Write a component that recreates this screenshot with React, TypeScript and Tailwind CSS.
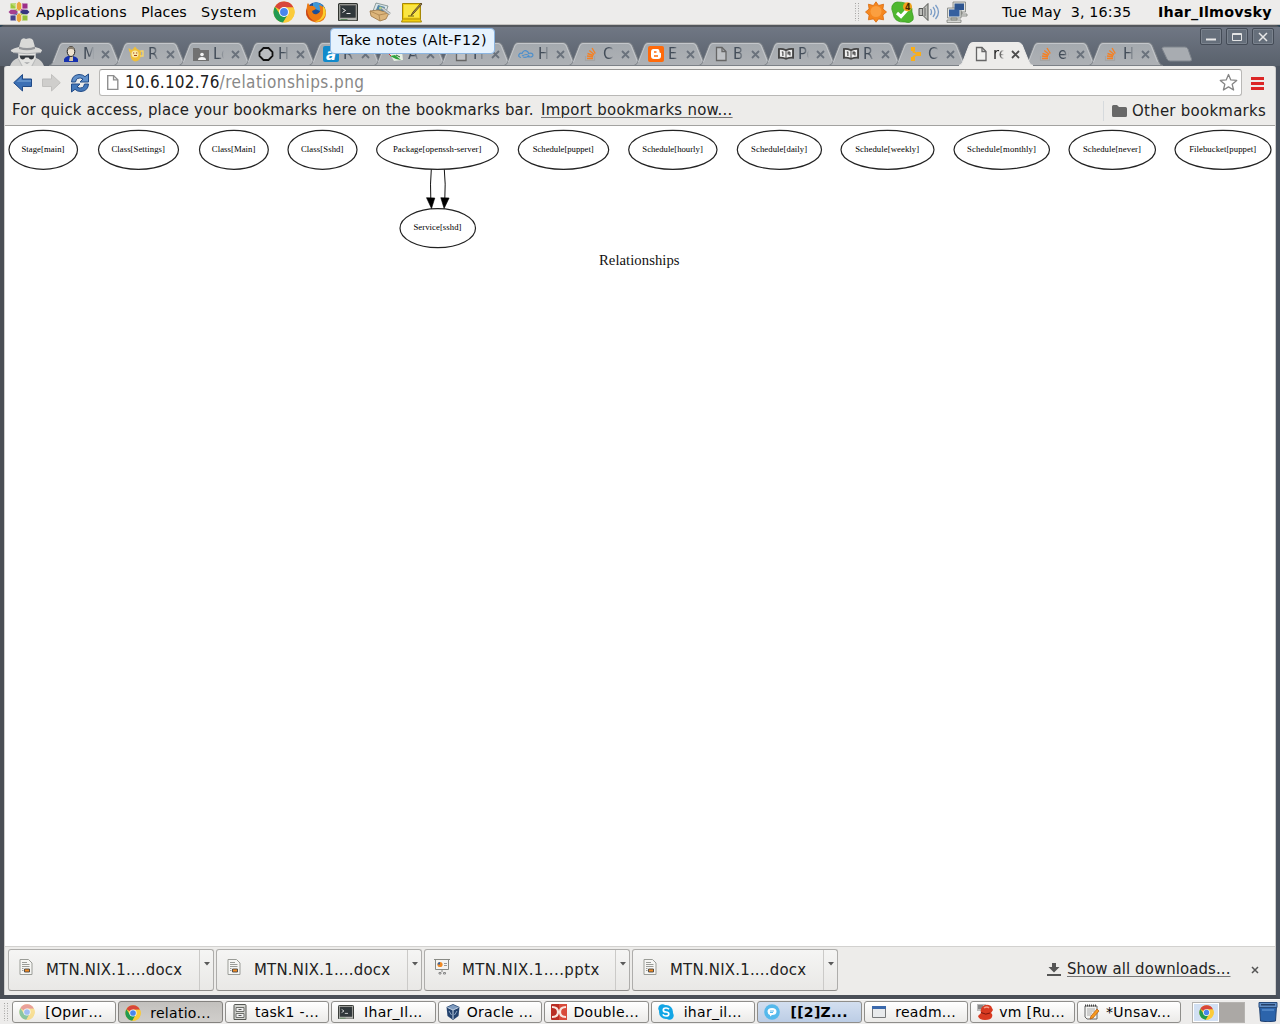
import React, { type ReactNode } from "react";

/* ---------- icons ---------- */

function Chrome({ size = 22, faded = false }: { size?: number; faded?: boolean }) {
  return (
    <svg width={size} height={size} viewBox="0 0 24 24" className={faded ? "opacity-50" : ""}>
      <circle cx="12" cy="12" r="11.500" fill="#f7c52b" />
      <path d="M12 12 L2.1 6.200 A11.500 11.500 0 0 1 22.400 7 L12 7z" fill="#d8463a" />
      <path d="M2.1 6.200 A11.500 11.500 0 0 0 11 23.500 L16.500 14.500 L7.600 14.500z" fill="#229a50" />
      <path d="M12 7 H22.400 A11.500 11.500 0 0 1 11 23.500 L16.400 14.400z" fill="#fbcb3a" />
      <circle cx="12" cy="12" r="5.400" fill="#fff" />
      <circle cx="12" cy="12" r="4.300" fill="#4a86ee" />
    </svg>
  );
}

function Pinwheel() {
  return (
    <svg width="22" height="22" viewBox="0 0 22 22">
      <path d="M11 .500l2.500 2.500v4.500L11 10 8.500 7.500V3z" fill="#eaa63c" />
      <path d="M11 21.500L8.500 19v-4.500L11 12l2.500 2.500V19z" fill="#eaa63c" />
      <path d="M.500 11L3 8.500h4.500L10 11l-2.500 2.500H3z" fill="#a6408f" />
      <path d="M21.500 11L19 13.500h-4.500L12 11l2.500-2.500H19z" fill="#36357f" />
      <path d="M2.500 2.500h5.500v5L10 10 2.500 7.500z" fill="#9cc83c" />
      <path d="M2.500 2.500h5.500L7.300 6z" fill="#b9da6c" />
      <path d="M19.500 2.500H14v5L12 10l7.500-2.500z" fill="#9d2e88" />
      <path d="M2.500 19.500h5.500v-5L10 12l-7.500 2.500z" fill="#45448c" />
      <path d="M19.500 19.500H14v-5L12 12l7.500 2.500z" fill="#93c03a" />
      <path d="M8 3v5H3M14 3v5h5M8 19v-5H3M14 19v-5h5" stroke="#fff" strokeWidth="0.700" fill="none" />
    </svg>
  );
}

function Firefox() {
  return (
    <svg width="22" height="22" viewBox="0 0 22 22">
      <circle cx="11" cy="11" r="9.800" fill="#1c4f99" />
      <path d="M8 2q6-2 10 3l-3 5-7-3z" fill="#3c98d8" />
      <path d="M2 5q0-2 1-3l2 3q4-1 6 3l-4 2q1 4 5 3 4-2 3-5 0-2-1-4 7 2 7 8 0 9-10 9.500Q1 20 1 11z" fill="#ec7a14" />
      <path d="M18 4.500q5 6 1 12-4 5-9 4 7-2 8-8z" fill="#fbcf2c" />
      <path d="M2 8q0 9 8 12.500Q1 19 1 10z" fill="#c9411b" />
    </svg>
  );
}

function Terminal({ size = 20 }: { size?: number }) {
  return (
    <svg width={size} height={size * 0.92} viewBox="0 0 20 18.4">
      <rect x="0.6" y="0.6" width="18.8" height="17.2" rx="1" fill="#b4b6b2" stroke="#30332f" strokeWidth="1.2" />
      <rect x="2.5" y="2.5" width="15" height="12" fill="#30383b" stroke="#444" strokeWidth="0.6" />
      <path d="M4.500 5.500l3 2-3 2M8.500 10.500h4" stroke="#eee" fill="none" />
      <path d="M2.500 16.500h7" stroke="#5a8a5a" />
    </svg>
  );
}

function MailBox() {
  return (
    <svg width="22" height="20" viewBox="0 0 22 20">
      <path d="M7 1l12 3-3 9-12-4z" fill="#dce6e8" stroke="#788" strokeWidth="0.8" />
      <path d="M9 3l7 2-2 5-7-2z" fill="#5287a8" />
      <circle cx="11.500" cy="6" r="1.500" fill="#b9d08a" />
      <path d="M1 9l8-1 11 3-3 6-6 2-9-5z" fill="#dcb57b" stroke="#9b7443" strokeWidth="0.8" />
      <path d="M1 9l9 4 10-2M10 13l1 6" fill="none" stroke="#a9824d" strokeWidth="0.8" />
      <path d="M13 6l8 6" stroke="#8d9496" strokeWidth="2.600" />
      <path d="M13 6l8 6" stroke="#d4d9da" strokeWidth="1.200" />
    </svg>
  );
}

function Note() {
  return (
    <svg width="22" height="21" viewBox="0 0 22 21">
      <path d="M1.500 1.500h18v16l1 2.500H.500l1-2.500z" fill="#f2cf10" stroke="#a68806" />
      <path d="M1.500 17h18" stroke="#b18f08" />
      <path d="M3 3h15v12.500H3z" fill="#fae544" />
      <path d="M20 1l-8 9-2 3.500 3-2.500 8-9z" fill="#a98d55" stroke="#4b3a14" strokeWidth="0.8" />
      <path d="M7 14h6" stroke="#6a5a10" />
    </svg>
  );
}

function Starburst() {
  return (
    <svg width="22" height="22" viewBox="0 0 22 22">
      <path d="M11 .800l2.600 3.700 5-1.300-.700 4.800 3.600 3-3.600 3 .700 4.800-5-.900L11 21.200l-2.600-3.300-5 .900.700-4.800L.500 11l3.600-3-.700-4.800 5 1.300z" fill="#f5871f" stroke="#d9690c" strokeWidth="0.800" />
      <circle cx="11" cy="10.500" r="5.500" fill="#fb9f40" />
    </svg>
  );
}

function SkypeStatus() {
  return (
    <svg width="23" height="23" viewBox="0 0 23 23">
      <path d="M6 1q5 0 8 1 8 2 7 9 2 5 1 8-3 4-8 2Q3 22 2 12 0 8 1 5q2-4 5-4z" fill="#4fb830" stroke="#389a1e" strokeWidth="0.700" />
      <path d="M6 12l4 3.500 6-6.500" stroke="#fff" strokeWidth="3.200" fill="none" />
      <circle cx="16.500" cy="5.800" r="4.500" fill="#f3a21c" />
      <text x="14" y="8.700" fontSize="8" fontWeight="bold" fontFamily="DejaVu Sans, sans-serif" fill="#4a2a00">4</text>
    </svg>
  );
}

function Speaker() {
  return (
    <svg width="22" height="20" viewBox="0 0 22 20">
      <path d="M1 6.500h4L10 1.500v17L5 13.500H1z" fill="#bcbdb9" stroke="#555753" />
      <path d="M4.500 7v6M7 6v8" stroke="#666" />
      <path d="M12.500 7q2 3 0 6M15 5q4 5 0 10M17.500 3q6 7 0 14" fill="none" stroke="#7a9cc6" strokeWidth="1.300" />
    </svg>
  );
}

function Network() {
  return (
    <svg width="22" height="22" viewBox="0 0 22 22">
      <g stroke="#7c7e79" strokeWidth="0.800" fill="#e2e3e0">
        <path d="M7 1h12.500v10H7zM11 11h5v2h-5zM9 13h12v2H9z" />
        <path d="M1.500 7H15v10H1.500zM5 17h6v2H5zM1 19h14v2.400H1z" />
      </g>
      <path d="M8.500 2.500H18v6.500H8.500z" fill="#2e5590" />
      <path d="M3 8.500h10.500v7H3z" fill="#355f9f" />
    </svg>
  );
}

function Incognito() {
  return (
    <svg width="34" height="28" viewBox="0 0 34 28">
      <path d="M0 28q2-6 8-8l1-4h16l1 4q6 2 8 8z" fill="#d0d0cf" />
      <path d="M8 14h18l-1 8-4 6h-8l-4-6z" fill="#e4e4e2" />
      <path d="M9 9l2-7q2-3 5-1 5-2 7 1l2 7q5 1 7 3 0 2-3 2.500-12 2-25 0Q0 14 1 12q3-2 8-3z" fill="#dadad8" />
      <path d="M9 8.500q8 3 16 0v2.500q-8 2.500-16 0z" fill="#94969a" />
      <path d="M3 14.500q14 2.500 28 0" stroke="#b3b5b7" fill="none" />
      <path d="M9.500 17.500h15l-1 3q-3 2.500-5-1h-3q-2 3.500-5 1z" fill="#33383e" />
      <path d="M8.500 21l3.500 7M25.500 21L22 28" stroke="#b0b2b3" fill="none" strokeWidth="0.800" />
      <path d="M14 24.500h6l-3 1.200z" fill="#8b8e91" />
    </svg>
  );
}

function PageIcon({ color = "#666", size = 16 }: { color?: string; size?: number }) {
  return (
    <svg width={size} height={size} viewBox="0 0 16 16">
      <path d="M3.500 1.500h5.500l4 4v9h-9.500z" fill="#fff" fillOpacity="0.250" stroke={color} strokeWidth="1.300" />
      <path d="M9 1.500v4h4" fill="none" stroke={color} strokeWidth="1.300" />
    </svg>
  );
}

const favicon: Record<string, ReactNode> = {
  person: (
    <svg width="16" height="16" viewBox="0 0 16 16">
      <path d="M1 16v-3q1-2 4-3h5q4 1 5 3v3z" fill="#1631ae" />
      <path d="M7 10h3v5H6z" fill="#d8c8a8" />
      <ellipse cx="8" cy="5.500" rx="3.800" ry="5" fill="#eee2cf" stroke="#222" />
      <path d="M4.500 4q0-3.500 3.500-3.500T11.500 4q-3.500-2-7 0z" fill="#8a8172" />
    </svg>
  ),
  teapot: (
    <svg width="16" height="16" viewBox="0 0 16 16">
      <path d="M2.500 7Q.500 5 .500 2l3 2 1.500-1 2-2.500L9 3l4 2v5q-1 5-6 5.500Q2 14 2.500 7z" fill="#f0bf38" />
      <circle cx="7" cy="8" r="3.500" fill="#fae9a6" />
      <path d="M5 7h1.300M8 7h1.300M6 9.500h3" stroke="#a2461b" />
      <path d="M12.500 5h2.500v5h-3" fill="none" stroke="#f6d468" strokeWidth="1.400" />
    </svg>
  ),
  folder: (
    <svg width="16" height="14" viewBox="0 0 16 14">
      <path d="M0 1h6l1.500 2H16v11H0z" fill="#717171" />
      <circle cx="9" cy="7.500" r="1.800" fill="#f3f3f3" />
      <path d="M5 13q0-3 4-3t4 3z" fill="#f3f3f3" />
    </svg>
  ),
  hex: (
    <svg width="16" height="16" viewBox="0 0 16 16">
      <path d="M5.500 2h5l4 4v4l-4 4h-5l-4-4V6z" fill="#b9bcc0" stroke="#111" strokeWidth="1.800" />
    </svg>
  ),
  a: (
    <svg width="16" height="16" viewBox="0 0 16 16">
      <rect width="16" height="16" rx="2" fill="#118acb" />
      <text x="3" y="13.500" fontSize="15" fontStyle="italic" fontWeight="bold" fontFamily="DejaVu Sans, sans-serif" fill="#fff">a</text>
    </svg>
  ),
  green: (
    <svg width="16" height="16" viewBox="0 0 16 16">
      <path d="M0 5h14l1 9-9 1z" fill="#e7efe3" />
      <path d="M2 10l5-1 6 5-5-1z" fill="#2fa23b" />
      <path d="M8 9l4 2" stroke="#266d2c" />
      <path d="M1 8l2 2" stroke="#c33" />
    </svg>
  ),
  page: <PageIcon />,
  cloud: (
    <svg width="16" height="12" viewBox="0 0 16 12">
      <path d="M3 9.500Q0 9 1 6.500q1-2 3-1Q6 1 9.500 3.500q1 1 1 2 4-1 4.500 1.500 0 3-6 1.500M4 8q5-3 7 0-3 2-6 1" fill="none" stroke="#4d8fcc" strokeWidth="1.200" />
    </svg>
  ),
  stack: (
    <svg width="14" height="16" viewBox="0 0 14 16">
      <path d="M1.500 10v4.500h9V10" fill="none" stroke="#a4a4a4" strokeWidth="1.200" />
      <path d="M3 12.500h6M3 10l6 .800M3.500 7.500l6 2M5.300 4.500l4.900 4M8 2l3.300 5.500" stroke="#f48024" strokeWidth="1.400" />
    </svg>
  ),
  blogger: (
    <svg width="16" height="16" viewBox="0 0 16 16">
      <rect width="16" height="16" rx="2" fill="#ff6a0a" />
      <path d="M5.500 3h4q2 0 2 3 0 1 1.500 1v3q0 3-3 3H6q-3 0-3-3V6q0-3 2.500-3z" fill="#fff" />
      <path d="M6 6h2.500M6 10h4" stroke="#ff6a0a" strokeWidth="1.400" />
    </svg>
  ),
  book: (
    <svg width="16" height="14" viewBox="0 0 17 14">
      <path d="M0 1q4-1 8.500 1Q13 0 17 1v11q-4-1-8.500 1Q4 11 0 12z" fill="#444" />
      <path d="M2 2.500q3 0 6 1.200v7.300q-3-1.200-6-1zM9 3.700q3-1.200 6-1.200V10q-3-.200-6 1z" fill="#eee" />
      <path d="M4 4.500l1.200.500v4M12.700 5h-2v2h2v-2 3.500" fill="none" stroke="#444" strokeWidth="1.200" />
    </svg>
  ),
  nodes: (
    <svg width="12" height="16" viewBox="0 0 12 16">
      <path d="M3.500 3v3l5 2-5 2.500V13" fill="none" stroke="#fbae16" strokeWidth="1.800" />
      <path d="M1 1h4v4H1zM7 6h4v4H7zM1 11h4v4H1z" fill="#fbae16" />
    </svg>
  ),
};

/* ---------- browser tabs ---------- */

const tabs: { icon: string; label: string; active?: boolean }[] = [
  { icon: "person", label: "M" },
  { icon: "teapot", label: "R" },
  { icon: "folder", label: "Lo" },
  { icon: "hex", label: "H" },
  { icon: "a", label: "R" },
  { icon: "green", label: "A" },
  { icon: "page", label: "H" },
  { icon: "cloud", label: "H" },
  { icon: "stack", label: "C" },
  { icon: "blogger", label: "E" },
  { icon: "page", label: "B" },
  { icon: "book", label: "Po" },
  { icon: "book", label: "R" },
  { icon: "nodes", label: "C" },
  { icon: "page", label: "re", active: true },
  { icon: "stack", label: "ec" },
  { icon: "stack", label: "H" },
];

function Tab({ icon, label, active }: { icon: string; label: string; active?: boolean }) {
  return (
    <div className={`relative h-6 w-[65px] shrink-0 ${active ? "z-10" : ""}`}>
      <svg width="77" height="24" viewBox="0 0 77 24" className="absolute left-[-1px] top-0">
        <path
          d="M0 23.500Q2.500 23 3.500 20.500L10 3.500Q11 .500 14 .500H59Q62 .500 63.200 3L70 20Q71.500 23.500 74 23.500z"
          fill={active ? "#edecea" : "url(#tabfill)"}
          stroke={active ? "#edecea" : "#7c8187"}
        />
        {!active && <path d="M4.500 20L10.800 4Q11.800 1.500 14 1.500H59Q61 1.500 62.200 4L68.500 20" fill="none" stroke="#c3c6ca" />}
      </svg>
      <div className="relative flex h-full items-center pl-[13px]">
        <span className="flex w-4 shrink-0 justify-center">{favicon[icon]}</span>
        <span
          className={`ml-[4px] w-[11px] shrink-0 overflow-hidden text-[16.500px] leading-[22px] [mask-image:linear-gradient(to_right,black_50%,transparent)] ${active ? "text-[#222]" : "text-[#434d59]"}`}
        >
          {label}
        </span>
        <svg width="9" height="9" viewBox="0 0 9 9" className="ml-[7px] shrink-0">
          <path d="M1 1l7 7M8 1L1 8" stroke={active ? "#4c4c4c" : "#6a727c"} strokeWidth="1.800" />
        </svg>
      </div>
    </div>
  );
}

/* ---------- graph ---------- */

/* x1/x2: ellipse extent, w: label width */
const nodes = [
  { label: "Stage[main]", x1: 9, x2: 77.5, w: 43 },
  { label: "Class[Settings]", x1: 98.5, x2: 178.5, w: 53.5 },
  { label: "Class[Main]", x1: 199.5, x2: 268.3, w: 43.5 },
  { label: "Class[Sshd]", x1: 288, x2: 357, w: 42.5 },
  { label: "Package[openssh-server]", x1: 376.7, x2: 498.3, w: 88.5 },
  { label: "Schedule[puppet]", x1: 518.3, x2: 608.7, w: 61 },
  { label: "Schedule[hourly]", x1: 628.7, x2: 717, w: 60.5 },
  { label: "Schedule[daily]", x1: 737.3, x2: 821.5, w: 56 },
  { label: "Schedule[weekly]", x1: 841, x2: 934, w: 64 },
  { label: "Schedule[monthly]", x1: 954, x2: 1049.5, w: 69 },
  { label: "Schedule[never]", x1: 1069, x2: 1155.5, w: 58 },
  { label: "Filebucket[puppet]", x1: 1175, x2: 1271, w: 67 },
];

function GraphNode({ label, x1, x2, w, cy }: { label: string; x1: number; x2: number; w: number; cy: number }) {
  const cx = (x1 + x2) / 2;
  return (
    <g>
      <ellipse cx={cx} cy={cy} rx={(x2 - x1) / 2} ry="19.500" fill="none" stroke="#222" strokeWidth="1.200" />
      <text x={cx - w / 2 - 0.3} y={cy + 2.2} textLength={w} fontSize="8.700" fill="#000">
        {label}
      </text>
    </g>
  );
}

function Graph() {
  return (
    <svg width="1270" height="150" viewBox="5 126 1270 150" className="block" fontFamily="Liberation Serif, serif">
      {nodes.map((n) => (
        <GraphNode key={n.label} {...n} cy={149.8} />
      ))}
      <GraphNode label="Service[sshd]" x1={400} x2={475.5} w={48} cy={228.2} />
      <path d="M431.300 169.500Q430 184 430.800 199M444.300 169.500Q445.800 184 444.800 199" fill="none" stroke="#111" />
      <path d="M426.500 197.700l8.300.300-3.300 10.500zM440.800 197.700l8.300.300-5 10.500z" fill="#000" stroke="#000" strokeWidth="0.600" />
      <text x="599" y="265" textLength="80.500" fontSize="14.700" fill="#111">
        Relationships
      </text>
    </svg>
  );
}

/* ---------- downloads ---------- */

function DocIcon({ slides = false }: { slides?: boolean }) {
  return slides ? (
    <svg width="16" height="16" viewBox="0 0 16 16">
      <path d="M0 .500h16M1.500 1v9.500h13V1" fill="#f4f4f2" stroke="#888a85" />
      <circle cx="6" cy="5.500" r="2.600" fill="#f08a24" />
      <path d="M6 5.500V3a2.600 2.600 0 0 0-2.600 2.500z" fill="#3465a4" />
      <path d="M10 4.500h3M10 6.500h3" stroke="#999" />
      <path d="M8 11v2M5 13.500h2v1.500H5zM9.500 13.500h2v1.500h-2z" stroke="#888" fill="none" />
    </svg>
  ) : (
    <svg width="14" height="16" viewBox="0 0 14 16">
      <path d="M1 .500h8.500l3.500 3.500v11.500H1z" fill="#f6f6f4" stroke="#9a9c97" />
      <path d="M3 3.500h5M3 5.500h7.500M3 7.500h7.500M3 9.500h1.500M3 11.500h1.500" stroke="#9a9c98" />
      <path d="M5.500 10h5v3h-5z" fill="#f08a24" stroke="#444" strokeWidth="0.900" />
    </svg>
  );
}

function Download({ name, slides }: { name: string; slides?: boolean }) {
  return (
    <div className="flex h-[42px] w-[206px] shrink-0 rounded-[3px] border border-[#aeadab] border-b-[#8d8c8a] bg-gradient-to-b from-[#f5f5f4] to-[#e9e8e6]">
      <div className="flex h-[40px] w-[191px] items-start border-r border-[#cbcac8]">
        <span className="ml-[9px] mt-[9px] flex w-4 justify-center">
          <DocIcon slides={slides} />
        </span>
        <span
          className={`ml-[12px] whitespace-nowrap text-[16.600px] leading-[39px] text-[#222] ${slides ? "tracking-[0.420px]" : "tracking-[0.220px]"}`}
        >
          {name}
        </span>
      </div>
      <svg width="6" height="4" viewBox="0 0 6 4" className="ml-[4px] mt-[12px]">
        <path d="M0 0h6L3 3.500z" fill="#5a5a5a" />
      </svg>
    </div>
  );
}

/* ---------- taskbar ---------- */

const taskIcons: Record<string, ReactNode> = {
  chromeFaded: <Chrome size={16} faded />,
  chrome: <Chrome size={16} />,
  cabinet: (
    <svg width="14" height="16" viewBox="0 0 14 16">
      <path d="M1 1.500q0-1 1-1h10q1 0 1 1v14H1z" fill="#d5d6d2" stroke="#555753" />
      <path d="M3 3.500h8v4H3zM3 9.500h8v4H3z" fill="#eee" stroke="#6c6e6a" />
      <path d="M5.500 5.500h3M5.500 11.500h3" stroke="#555" />
    </svg>
  ),
  terminal: <Terminal size={16} />,
  vbox: (
    <svg width="14" height="16" viewBox="0 0 14 16">
      <path d="M7 0l6.500 3-1 9L7 16l-5.500-4-1-9z" fill="#23426e" />
      <path d="M7 .800l5.500 2.500L7 6 1.500 3.300z" fill="#7f9bbf" />
      <path d="M7 6v9M1.500 3.500L7 6l5.500-2.500" fill="none" stroke="#c8d6e6" />
      <path d="M3 7l2.500 4M11 7l-2.500 4" fill="none" stroke="#8ea8c8" />
    </svg>
  ),
  dc: (
    <svg width="16" height="16" viewBox="0 0 16 16">
      <rect width="16" height="16" rx="1" fill="#b92d24" />
      <path d="M8 0h8v16H8z" fill="#d84a3a" />
      <path d="M1 3q6 0 6 5t-6 5M15 3q-6 0-6 5t6 5" stroke="#f8e6e0" strokeWidth="2.200" fill="none" />
    </svg>
  ),
  skype: (
    <svg width="16" height="16" viewBox="0 0 16 16">
      <circle cx="8" cy="8" r="7" fill="#12a5e5" />
      <circle cx="4.500" cy="4.500" r="4.200" fill="#12a5e5" />
      <circle cx="11.500" cy="11.500" r="4.200" fill="#12a5e5" />
      <path d="M11 5.300Q10 4 8 4 5.300 4 5.300 6T8 8t2.800 2T8 12q-2.300 0-3.200-1.600" stroke="#fff" strokeWidth="1.700" fill="none" />
    </svg>
  ),
  chat: (
    <svg width="16" height="16" viewBox="0 0 16 16">
      <circle cx="8" cy="8" r="7.800" fill="#55b9ec" />
      <path d="M8 4q4.500 0 4.500 3.500T8 11l-2 1.500V11Q3.500 10 3.500 7.500 3.500 4 8 4z" fill="#fff" />
      <path d="M6 7h4M6 8.500h3" stroke="#55b9ec" />
    </svg>
  ),
  window: (
    <svg width="14" height="12" viewBox="0 0 14 12">
      <path d="M.500.500h13v11H.500z" fill="#e8eaec" stroke="#77797a" />
      <path d="M0 0h14v3H0z" fill="#3b69ac" />
    </svg>
  ),
  redhat: (
    <svg width="16" height="16" viewBox="0 0 16 16">
      <path d="M0 0h9v7H0z" fill="#bbb" />
      <path d="M1 2h5M1 4h4" stroke="#555" />
      <path d="M5 3q4-4 9-1l2 4-2 3q2 1 1 4-1 3-7 3-6 0-7-4l3-3q-1-3 1-6z" fill="#d83a21" />
      <path d="M7 4q3-2 5 0" stroke="#f5a08a" fill="none" strokeWidth="1.500" />
      <path d="M4 8.500q5 3 9 .500" stroke="#7d160c" fill="none" />
    </svg>
  ),
  notepad: (
    <svg width="16" height="16" viewBox="0 0 16 16">
      <path d="M1 2h12v13H3l-2-2z" fill="#f4f4f2" stroke="#666" />
      <path d="M1 1.500h12" stroke="#444" strokeWidth="2" strokeDasharray="1 1" />
      <path d="M3 5h8M3 7h8M3 9h5M3 11h4" stroke="#aaa" />
      <path d="M13 5l2 2-6 7-3 1 1-3z" fill="#f79a1e" stroke="#b3540a" strokeWidth="0.700" />
    </svg>
  ),
};

const tasks: { icon: string; label: string; state?: "active" | "alert" }[] = [
  { icon: "chromeFaded", label: "[Ориг..." },
  { icon: "chrome", label: "relatio...", state: "active" },
  { icon: "cabinet", label: "task1 -..." },
  { icon: "terminal", label: "Ihar_Il..." },
  { icon: "vbox", label: "Oracle ..." },
  { icon: "dc", label: "Double..." },
  { icon: "skype", label: "ihar_il..." },
  { icon: "chat", label: "[[2]Z...", state: "alert" },
  { icon: "window", label: "readm..." },
  { icon: "redhat", label: "vm [Ru..." },
  { icon: "notepad", label: "*Unsav..." },
];

const taskStyle = {
  normal: "from-white to-[#ebeae8] border-[#8f8e8b]",
  active: "from-[#c3c1be] to-[#d0cecb] border-[#84827f] pt-[2px]",
  alert: "from-[#d3dff0] to-[#bccde5] border-[#8f8e8b] font-bold",
};

function Grip() {
  return (
    <svg width="5" height="18" viewBox="0 0 5 18">
      <path d="M.500 0v18M3.500 0v18" stroke="#a5a4a2" strokeDasharray="1 1.500" />
    </svg>
  );
}

function WindowButton({ children }: { children: ReactNode }) {
  return (
    <div className="flex h-[17px] w-[22px] items-center justify-center rounded-[2px] border border-[#444b56] bg-[#666f7b] shadow-[inset_0_0_0_1px_#7b838e]">
      <svg width="12" height="12" viewBox="0 0 12 12">
        {children}
      </svg>
    </div>
  );
}

/* ---------- page ---------- */

export default function App() {
  return (
    <div className="relative flex h-[1024px] w-[1280px] flex-col overflow-hidden bg-[#2c4456] font-['DejaVu_Sans',sans-serif] text-black">
      <svg width="0" height="0" className="absolute">
        <linearGradient id="tabfill" x1="0" y1="0" x2="0" y2="1">
          <stop offset="0" stopColor="#a4a9ae" />
          <stop offset="1" stopColor="#aeb1b5" />
        </linearGradient>
      </svg>

      {/* desktop panel */}
      <header className="flex h-[25px] shrink-0 items-center border-b border-[#c5c3c0] bg-[#edeceb] text-[14.300px]">
        <span className="ml-2 w-7">
          <Pinwheel />
        </span>
        <span className="w-[105px] pt-px tracking-[0.300px]">Applications</span>
        <span className="w-[60px] pt-px tracking-[0.050px]">Places</span>
        <span className="w-[72px] pt-px tracking-[0.420px]">System</span>
        <span className="flex w-[22px] justify-center"><Chrome /></span>
        <span className="ml-[10px] flex w-[22px] justify-center"><Firefox /></span>
        <span className="ml-[10px] flex w-[22px] justify-center"><Terminal /></span>
        <span className="ml-[10px] flex w-[22px] justify-center"><MailBox /></span>
        <span className="ml-[10px] flex w-[22px] justify-center"><Note /></span>
        <div className="ml-auto flex items-center">
          <span className="w-[10px]"><Grip /></span>
          <span className="w-[26px]"><Starburst /></span>
          <span className="w-[27px]"><SkypeStatus /></span>
          <span className="w-[28px]"><Speaker /></span>
          <span className="w-[56px]"><Network /></span>
          <span className="w-[156px] whitespace-pre pt-px tracking-[0.130px]">Tue May  3, 16:35</span>
          <span className="w-[122px] whitespace-nowrap pt-px font-bold tracking-[0.220px]">Ihar_Ilmovsky</span>
        </div>
      </header>

      {/* browser window */}
      <main className="flex h-[974px] shrink-0 flex-col rounded-t-[5px] border-t-2 border-[#53575d] bg-[#59616c] font-['DejaVu_Sans_Condensed','DejaVu_Sans',sans-serif]">
        <div className="flex h-[39px] shrink-0 items-end bg-gradient-to-b from-[#707784] to-[#59616c]">
          <div className="flex h-full w-[50px] items-end pl-[10px]">
            <Incognito />
          </div>
          <div className="flex h-6 items-end">
            {tabs.map((t, i) => (
              <Tab key={i} {...t} />
            ))}
          </div>
          <svg width="32" height="17" viewBox="0 0 32 17" className="mb-[3px] ml-[6px]">
            <path d="M1 2.500Q1 1 3 1h21q2 0 3 2l3.500 10q.500 2-1.500 2H9q-2 0-3-2z" fill="#a8acb1" stroke="#7f858d" />
          </svg>
          <div className="ml-auto flex h-full items-start gap-1 pr-[6px] pt-[1px]">
            <WindowButton><path d="M1 8.500h10" stroke="#e8e8e8" strokeWidth="2" /></WindowButton>
            <WindowButton><path d="M1.500 2.500h9v7h-9zM1 3.500h10" fill="none" stroke="#e4e4e4" /></WindowButton>
            <WindowButton><path d="M2 2l8 8M10 2l-8 8" stroke="#e8e8e8" strokeWidth="1.500" /></WindowButton>
          </div>
        </div>

        <div className="flex min-h-0 flex-1 flex-col border-x-[4px] border-b-[4px] border-l-[#4a4e55] border-r-[#4c5460] border-b-[#4a4f57]">
          <div className="flex min-h-0 flex-1 flex-col rounded-t-[3px] border-x border-[#cfcecc] bg-[#edecea]">
            {/* toolbar */}
            <div className="flex h-[33px] shrink-0 items-center">
              <svg width="20" height="20" viewBox="0 0 20 20" className="ml-[8px]">
                <path d="M9.500 1.500v4.500H18.500v7.500H9.500v4.500L.700 9.700z" fill="#3b6fb4" stroke="#204a87" />
                <path d="M8.500 4v3H18v2H3.500z" fill="#5f8fc9" />
              </svg>
              <svg width="20" height="20" viewBox="0 0 20 20" className="ml-[8px]">
                <path d="M10.500 1.500v4.500H1.500v7.500h9v4.500L19.300 9.700z" fill="#cfcecc" stroke="#c1c0be" />
              </svg>
              <svg width="20" height="20" viewBox="0 0 20 20" className="ml-[9px]">
                <path d="M1.500 9Q2 2 9 1.500q4 0 6 2.200L18.500 1v8H10l3-3Q10 4 7.500 5.500 6 6.500 5.500 9z" fill="#5f8fc9" stroke="#204a87" />
                <path d="M18.500 11q-.500 7-7.500 7.500-4 0-6-2.200L1.500 19v-8H10l-3 3q3 2 5.500.500 1.500-1 2-3.500z" fill="#4478ba" stroke="#204a87" />
              </svg>
              <div className="ml-[9px] flex h-[27px] w-[1143px] items-center rounded-[3px] border border-[#b9b8b6] border-t-[#989795] bg-white pl-[4px] pr-[3px]">
                <PageIcon color="#8e8e8e" size={17} />
                <span className="ml-[4px] whitespace-nowrap text-[17px] tracking-[0.200px] text-[#222]">
                  10.6.102.76<span className="tracking-[0.440px] text-[#888]">/relationships.png</span>
                </span>
                <svg width="19" height="19" viewBox="0 0 19 19" className="ml-auto">
                  <path d="M9.500 1.500l2.300 5.400 5.900.500-4.500 3.900 1.400 5.700-5.100-3.100L4.400 17l1.400-5.700L1.300 7.400l5.900-.500z" fill="#fff" stroke="#858585" strokeWidth="1.300" strokeLinejoin="round" />
                </svg>
              </div>
              <svg width="14" height="14" viewBox="0 0 14 14" className="ml-[9px]">
                <path d="M0 2.500h13M0 7.500h13M0 12.500h13" stroke="#dc2626" strokeWidth="3" />
              </svg>
            </div>
            {/* bookmarks bar */}
            <div className="flex h-[27px] shrink-0 items-center border-b border-[#a3a2a0] pb-[3px] text-[16.600px] tracking-[0.190px] text-[#222]">
              <span className="ml-[7px] w-[529px] whitespace-nowrap">
                For quick access, place your bookmarks here on the bookmarks bar.
              </span>
              <span className="whitespace-nowrap tracking-[0.280px] underline decoration-[#777] decoration-1 underline-offset-2">Import bookmarks now...</span>
              <span className="ml-auto mr-[8px] h-5 w-px bg-[#d6dadd]" />
              <svg width="15" height="12" viewBox="0 0 15 12">
                <path d="M0 1.500Q0 0 1.500 0H5l2 2h6.500Q15 2 15 3.500v7q0 1.500-1.500 1.500h-12Q0 12 0 10.500z" fill="#686868" />
              </svg>
              <span className="ml-[5px] w-[143px] whitespace-nowrap pt-px tracking-[0.280px]">Other bookmarks</span>
            </div>
            {/* document */}
            <div className="min-h-0 flex-1 bg-white">
              <Graph />
            </div>
            {/* download shelf */}
            <div className="flex h-[49px] shrink-0 items-start gap-[2px] border-t border-[#d2d1cf] pl-[3px] pt-[2px]">
              <Download name="MTN.NIX.1....docx" />
              <Download name="MTN.NIX.1....docx" />
              <Download name="MTN.NIX.1....pptx" slides />
              <Download name="MTN.NIX.1....docx" />
              <div className="ml-auto flex h-[41px] items-center text-[16.600px] tracking-[0.100px] text-[#222]">
                <svg width="14" height="14" viewBox="0 0 14 14">
                  <path d="M5 0h4v4h3.500L7 9.500 1.500 4H5zM0 11h14v2H0z" fill="#555" />
                </svg>
                <span className="ml-[6px] w-[184px] whitespace-nowrap underline decoration-[#777] decoration-1 underline-offset-2">
                  Show all downloads...
                </span>
                <svg width="8" height="8" viewBox="0 0 8 8" className="mr-[16px]">
                  <path d="M1 1l6 6M7 1L1 7" stroke="#555" strokeWidth="1.500" />
                </svg>
              </div>
            </div>
          </div>
        </div>
      </main>

      {/* taskbar */}
      <footer className="flex h-[25px] shrink-0 items-center border-t border-white bg-[#edeceb] pl-[4px] text-[14px]">
        <Grip />
        <div className="ml-[3px] flex w-[1169px] gap-[2px]">
          {tasks.map((t) => (
            <div
              key={t.label}
              className={`flex h-[22px] flex-1 items-center overflow-hidden rounded-[3px] border bg-gradient-to-b ${taskStyle[t.state ?? "normal"]}`}
            >
              <span className="ml-[6px] flex w-4 shrink-0 justify-center">{taskIcons[t.icon]}</span>
              <span className="w-[78px] whitespace-nowrap text-center leading-[20px] tracking-[0.280px]">{t.label}</span>
            </div>
          ))}
        </div>
        <div className="ml-[11px] flex h-[21px] w-[53px] border border-[#b5b3b0] bg-[#aba8a5]">
          <div className="flex w-[26px] items-center justify-center border border-white bg-[#d2e0f3]">
            <Chrome size={15} />
          </div>
        </div>
        <svg width="20" height="20" viewBox="0 0 20 20" className="ml-[13px]">
          <path d="M1.500 4h17l-1 15q-7.500 1.500-15 0z" fill="#2c64ab" stroke="#1d3f70" />
          <path d="M1 .500h18v5H1z" fill="#5f8cc3" stroke="#274b7c" />
          <path d="M3 2h14v1.500H3z" fill="#243f66" />
          <path d="M4 8h12" stroke="#6da0dc" />
        </svg>
      </footer>

      <div className="absolute left-[330px] top-[28px] z-20 flex h-[26px] w-[165px] items-center justify-center whitespace-nowrap rounded-[4px] border border-[#8ab4e0] bg-[#e6f2fd] text-[14.300px] tracking-[0.300px]">
        Take notes (Alt-F12)
      </div>
    </div>
  );
}
